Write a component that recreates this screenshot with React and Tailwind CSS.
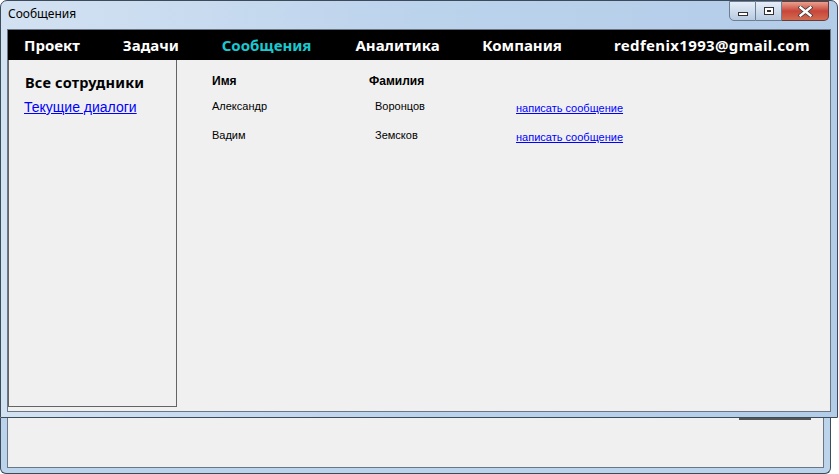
import React from "react";

const navItems = [
  { label: "Проект", w: "w-[99px]" },
  { label: "Задачи", w: "w-[99px]" },
  { label: "Сообщения", w: "w-[134px]", active: true },
  { label: "Аналитика", w: "w-[127px]" },
  { label: "Компания", w: "w-[132px]" },
];

const people = [
  { name: "Александр", surname: "Воронцов" },
  { name: "Вадим", surname: "Земсков" },
];

function CaptionButtons() {
  return (
    <div className="flex h-[20px] self-start mr-[8px]">
      <div className="w-[27px] h-[20px] border border-[#6d7e93] rounded-bl-[5px] bg-gradient-to-b from-[#e6eef8] to-[#b9cbe1] flex items-center justify-center">
        <div className="w-[10px] h-[4px] border border-[#333] bg-white mt-[5px]" />
      </div>
      <div className="w-[26px] h-[20px] border-y border-r border-[#6d7e93] bg-gradient-to-b from-[#e6eef8] to-[#b9cbe1] flex items-center justify-center">
        <div className="w-[10px] h-[8px] border border-[#333] bg-white flex items-center justify-center">
          <div className="w-[4px] h-[2px] border border-[#333]" />
        </div>
      </div>
      <div className="w-[47px] h-[20px] border-y border-r border-[#6d3a34] rounded-br-[5px] bg-gradient-to-b from-[#e8a090] via-[#c8453a] to-[#d26b50] flex items-center justify-center">
        <svg width="15" height="11" viewBox="0 0 15 11">
          <path d="M2.5 1.5 L12.5 9.5 M12.5 1.5 L2.5 9.5" stroke="#3a3a3a" strokeWidth="4" strokeLinecap="square" />
          <path d="M2.5 1.5 L12.5 9.5 M12.5 1.5 L2.5 9.5" stroke="#ffffff" strokeWidth="2.4" strokeLinecap="square" />
        </svg>
      </div>
    </div>
  );
}

export default function App() {
  return (
    <div className="w-[839px] h-[474px] overflow-hidden bg-white flex flex-col font-['Liberation_Sans',sans-serif]">
      {/* active window */}
      <div className="w-[838px] h-[418px] shrink-0 border border-[#3c4a5a] rounded-t-[7px] bg-gradient-to-r from-[#d3e2f2] via-[#bcd3ec] to-[#b3cce8] flex flex-col">
        <div className="h-[28px] shrink-0 flex items-center justify-between pl-[7px]">
          <span className="text-[12px] text-black font-['Noto_Sans',sans-serif] -mt-[3px]">Сообщения</span>
          <CaptionButtons />
        </div>
        <div className="mx-[6px] mb-[5px] flex-1 border border-[#6a7585] bg-[#f0f0f0] flex flex-col">
          <div className="h-[30px] shrink-0 bg-black flex items-center pl-[16px] pr-[20px] font-['Noto_Sans',sans-serif] font-bold text-[15px]">
            {navItems.map((item) => (
              <span
                key={item.label}
                className={`${item.w} ${item.active ? "text-[#19c8d0]" : "text-white"}`}
              >
                {item.label}
              </span>
            ))}
            <span className="ml-auto text-white tracking-[0.35px]">redfenix1993@gmail.com</span>
          </div>
          <div className="flex-1 flex">
            <div className="w-[169px] mb-[4px] border border-t-0 border-[#646464] pl-[16px] pt-[12px]">
              <div className="text-[14.5px] font-bold text-black font-['Noto_Sans',sans-serif] tracking-[0.2px] leading-[20px]">
                Все сотрудники
              </div>
              <a className="block -ml-[1px] mt-[5px] text-[14px] text-[#0000ff] underline leading-[20px]">
                Текущие диалоги
              </a>
            </div>
            <div className="flex-1 pl-[35px] pt-[14px] text-[11px] text-black">
              <div className="grid grid-cols-[157px_147px_auto] font-bold text-[12px] leading-[14px]">
                <span>Имя</span>
                <span>Фамилия</span>
                <span />
              </div>
              {people.map((p, i) => (
                <div
                  key={p.name}
                  className={`grid grid-cols-[157px_147px_auto] leading-[14px] ${i === 0 ? "mt-[11px]" : "mt-[13px]"}`}
                >
                  <span>{p.name}</span>
                  <span className="pl-[6px]">{p.surname}</span>
                  <a className="mt-[2px] text-[#0000ff] underline">написать сообщение</a>
                </div>
              ))}
            </div>
          </div>
        </div>
      </div>
      {/* window behind */}
      <div className="w-[831px] flex-1 border-x border-b border-[#3c4a5a] rounded-b-[6px] bg-[#bcd3ec] flex flex-col px-[6px] pb-[5px] relative">
        <div className="flex-1 border-x border-b border-[#6a7585] bg-[#f0f0f0]" />
        <div className="absolute top-0 left-[738px] w-[72px] h-[2px] bg-[#555]" />
      </div>
    </div>
  );
}
